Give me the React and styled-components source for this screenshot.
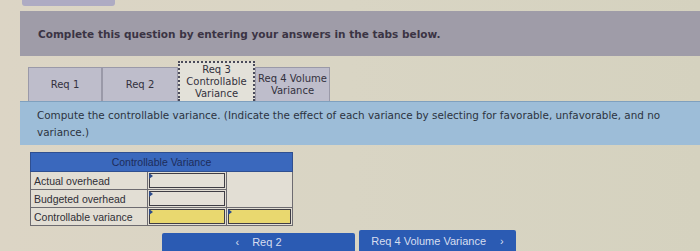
import React from "react";
import styled, { createGlobalStyle } from "styled-components";

const GlobalStyle = createGlobalStyle`
  body {
    margin: 0;
    background: linear-gradient(90deg, #dcd5c5 0%, #d9d5c4 50%, #d5d2bf 100%);
    font-family: "DejaVu Sans", Verdana, sans-serif;
  }
`;

const Page = styled.div`
  width: 700px;
  height: 251px;
  overflow: hidden;
  padding-left: 20px;
  box-sizing: border-box;
`;

const PrevBox = styled.div`
  width: 93px;
  height: 6px;
  margin-left: 2px;
  background: #aeabc3;
  border-radius: 0 0 3px 3px;
`;

const Banner = styled.div`
  margin-top: 5px;
  height: 45px;
  background: #9f9ca8;
  display: flex;
  align-items: center;
  padding-left: 18px;
  font-size: 10.5px;
  font-weight: bold;
  color: #3b3444;
`;

const TabRow = styled.div`
  display: flex;
  align-items: flex-end;
  margin-top: 5px;
  padding-left: 8px;
`;

const Tab = styled.div`
  box-sizing: border-box;
  width: ${(p) => p.$w}px;
  height: ${(p) => (p.$active ? 40 : 34)}px;
  display: flex;
  align-items: center;
  justify-content: center;
  text-align: center;
  font-size: 10px;
  line-height: 12px;
  color: #33313d;
  background: ${(p) => (p.$active ? "#e3e1d9" : "#bebdcb")};
  border: ${(p) => (p.$active ? "2px dotted #4a4a5a" : "1px solid #9a99a8")};
  border-bottom: none;
`;

const Instructions = styled.div`
  height: 44px;
  box-sizing: border-box;
  background: #9dbdd8;
  border-top: 1px solid #7fa0be;
  padding: 5px 17px 0;
  font-size: 10.4px;
  line-height: 17px;
  color: #2c3340;
`;

const Table = styled.table`
  margin: 7px 0 0 10px;
  width: 263px;
  border-collapse: collapse;
  font-family: "Liberation Sans", Arial, sans-serif;
  font-size: 10.5px;
  color: #2f2e36;
`;

const HeadCell = styled.th`
  background: #3a68bd;
  color: #1d2c5a;
  font-weight: normal;
  height: 18px;
  padding: 0;
  text-align: center;
  border: 1px solid #2f4f90;
`;

const Label = styled.td`
  width: 113px;
  height: 16px;
  padding: 0 0 0 3px;
  background: #e2ded4;
  border: 1px solid #6d6b70;
`;

const Cell = styled.td`
  padding: 0;
  width: ${(p) => p.$w}px;
  background: #e2ded4;
  border: 1px solid #6d6b70;
`;

const Input = styled.div`
  position: relative;
  height: 13px;
  margin: 1px;
  border: 1px solid #3f3d45;
  background: ${(p) => (p.$yellow ? "#e9d86f" : "#e4e0d7")};
  &::before {
    content: "";
    position: absolute;
    left: -1px;
    top: -1px;
    border-top: 3px solid transparent;
    border-bottom: 3px solid transparent;
    border-left: 4px solid #2b4a8a;
  }
`;

const Nav = styled.div`
  display: flex;
  gap: 4px;
  margin: 4px 0 0 142px;
  align-items: flex-end;
`;

const NavButton = styled.div`
  box-sizing: border-box;
  width: ${(p) => p.$w}px;
  height: ${(p) => p.$h}px;
  background: #2b5bb3;
  color: #d7def0;
  font-family: "Liberation Sans", Arial, sans-serif;
  font-size: 11px;
  display: flex;
  align-items: center;
  justify-content: center;
  gap: ${(p) => p.$gap}px;
  border-radius: 2px 2px 0 0;
`;

export default function App() {
  return (
    <>
      <GlobalStyle />
      <Page>
        <PrevBox />
        <Banner>Complete this question by entering your answers in the tabs below.</Banner>
        <TabRow>
          <Tab $w={74}>Req 1</Tab>
          <Tab $w={76}>Req 2</Tab>
          <Tab $w={77} $active>
            Req 3<br />
            Controllable
            <br />
            Variance
          </Tab>
          <Tab $w={75}>
            Req 4 Volume
            <br />
            Variance
          </Tab>
        </TabRow>
        <Instructions>
          Compute the controllable variance. (Indicate the effect of each variance by selecting for favorable, unfavorable, and no
          variance.)
        </Instructions>
        <Table>
          <thead>
            <tr>
              <HeadCell colSpan={3}>Controllable Variance</HeadCell>
            </tr>
          </thead>
          <tbody>
            <tr>
              <Label>Actual overhead</Label>
              <Cell $w={78}>
                <Input />
              </Cell>
              <Cell rowSpan={2} />
            </tr>
            <tr>
              <Label>Budgeted overhead</Label>
              <Cell $w={78}>
                <Input />
              </Cell>
            </tr>
            <tr>
              <Label>Controllable variance</Label>
              <Cell $w={78}>
                <Input $yellow />
              </Cell>
              <Cell>
                <Input $yellow />
              </Cell>
            </tr>
          </tbody>
        </Table>
        <Nav>
          <NavButton $w={193} $h={18} $gap={13}>
            <span>‹</span>
            <span>Req 2</span>
          </NavButton>
          <NavButton $w={157} $h={21} $gap={14}>
            <span>Req 4 Volume Variance</span>
            <span>›</span>
          </NavButton>
        </Nav>
      </Page>
    </>
  );
}
